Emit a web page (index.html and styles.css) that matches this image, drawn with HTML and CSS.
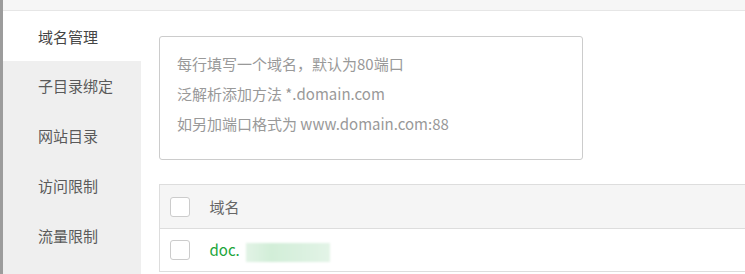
FILE: index.html
```html
<!DOCTYPE html>
<html lang="zh-CN">
<head>
  <meta charset="UTF-8">
  <title>站点设置</title>
  <link rel="stylesheet" href="styles.css">
</head>
<body>
  <div class="page">
    <div class="edge"></div>
    <div class="panel">
      <div class="topbar"></div>
      <div class="layout">
        <ul class="tabs">
          <li class="active">域名管理</li>
          <li>子目录绑定</li>
          <li>网站目录</li>
          <li>访问限制</li>
          <li>流量限制</li>
        </ul>
        <div class="main">
          <textarea class="domain-input" placeholder="每行填写一个域名，默认为80端口&#10;泛解析添加方法 *.domain.com&#10;如另加端口格式为 www.domain.com:88"></textarea>
          <table class="domain-table">
            <thead>
              <tr>
                <th class="check-cell"><span class="checkbox"></span></th>
                <th>域名</th>
              </tr>
            </thead>
            <tbody>
              <tr>
                <td class="check-cell"><span class="checkbox"></span></td>
                <td><a class="domain-link">doc.<span class="masked">r</span></a></td>
              </tr>
            </tbody>
          </table>
        </div>
      </div>
    </div>
  </div>
</body>
</html>
```

FILE: styles.css
```css
html, body {
  margin: 0;
  padding: 0;
  width: 745px;
  height: 274px;
  overflow: hidden;
  background: #fff;
  font-family: "Noto Sans CJK SC", "Noto Sans", sans-serif;
}
.page {
  display: flex;
  height: 274px;
}
.edge {
  width: 3px;
  background: #9c9c9c;
  flex-shrink: 0;
}
.panel {
  flex: 1;
  display: flex;
  flex-direction: column;
  min-width: 0;
}
.topbar {
  height: 10px;
  background: #f6f6f6;
  border-bottom: 1px solid #e6e6e6;
  flex-shrink: 0;
}
.layout {
  flex: 1;
  display: flex;
  min-height: 0;
}
.tabs {
  list-style: none;
  margin: 0;
  padding: 0;
  width: 138px;
  background: #efefef;
  flex-shrink: 0;
}
.tabs li {
  height: 50px;
  line-height: 50px;
  padding-left: 35px;
  font-size: 15px;
  color: #5a5a5a;
}
.tabs li.active {
  background: #fff;
  color: #444;
  line-height: 52px;
}
.main {
  flex: 1;
  padding: 25px 0 0 18px;
  overflow: hidden;
}
.domain-input {
  display: block;
  box-sizing: border-box;
  width: 424px;
  height: 124px;
  padding: 12px 17px;
  border: 1px solid #ccc;
  border-radius: 3px;
  font-family: inherit;
  font-size: 15px;
  line-height: 30px;
  resize: none;
  outline: none;
}
.domain-input::placeholder {
  color: #999;
}
.domain-table {
  width: 640px;
  margin-top: 24px;
  border-collapse: collapse;
  border: 1px solid #ddd;
  font-size: 15px;
}
.domain-table th {
  background: #f5f5f5;
  height: 43px;
  text-align: left;
  font-weight: normal;
  color: #666;
  border-bottom: 1px solid #ddd;
  padding: 0;
}
.domain-table td {
  height: 42px;
  padding: 0;
  border-bottom: 1px solid #ddd;
}
.check-cell {
  width: 50px;
  padding-left: 10px !important;
  box-sizing: border-box;
}
.checkbox {
  display: block;
  width: 18px;
  height: 18px;
  border: 1px solid #ccc;
  border-radius: 3px;
  background: #fff;
}
.domain-link {
  color: #20a53a;
}
.masked {
  display: inline-block;
  width: 84px;
  height: 19px;
  margin-left: 6px;
  vertical-align: -4px;
  color: transparent;
  background: linear-gradient(90deg, #e2f3e6, #d2eed8 30%, #dbf1e0 70%, #e3f4e7);
  filter: blur(1px);
}
```
